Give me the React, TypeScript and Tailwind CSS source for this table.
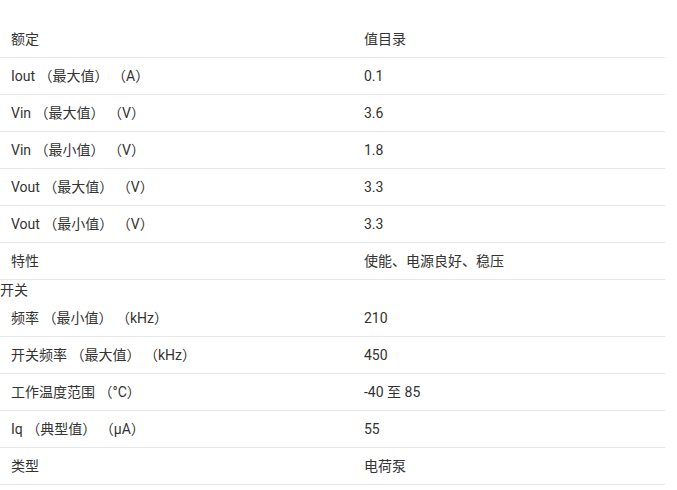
import React from "react";

const font = { fontFamily: '"Roboto", "Noto Sans CJK SC", sans-serif' };

type Row = { label: string; value: string; pre?: string };

const rows: Row[] = [
  { label: "Iout （最大值） （A）", value: "0.1" },
  { label: "Vin （最大值） （V）", value: "3.6" },
  { label: "Vin （最小值） （V）", value: "1.8" },
  { label: "Vout （最大值） （V）", value: "3.3" },
  { label: "Vout （最小值） （V）", value: "3.3" },
  { label: "特性", value: "使能、电源良好、稳压" },
  { pre: "开关", label: "频率 （最小值） （kHz）", value: "210" },
  { label: "开关频率 （最大值） （kHz）", value: "450" },
  { label: "工作温度范围 （°C）", value: "-40 至 85" },
  { label: "Iq （典型值） （µA）", value: "55" },
  { label: "类型", value: "电荷泵" },
];

function Line({ label, value }: { label: string; value: string }) {
  return (
    <div className="flex h-[37px] items-center border-b border-[#e6e6e6]">
      <div className="w-[353px] pl-[11px]">{label}</div>
      <div className="pl-[11px]">{value}</div>
    </div>
  );
}

export default function App() {
  return (
    <div
      className="w-[677px] h-[490px] bg-white text-[14px] text-[#333333] overflow-hidden"
      style={font}
    >
      <div className="w-[665px] pt-[21px]">
        <Line label="额定" value="值目录" />
        {rows.map((r, i) => (
          <React.Fragment key={i}>
            {r.pre && <div className="h-[20px] leading-[20px]">{r.pre}</div>}
            <Line label={r.label} value={r.value} />
          </React.Fragment>
        ))}
      </div>
    </div>
  );
}
